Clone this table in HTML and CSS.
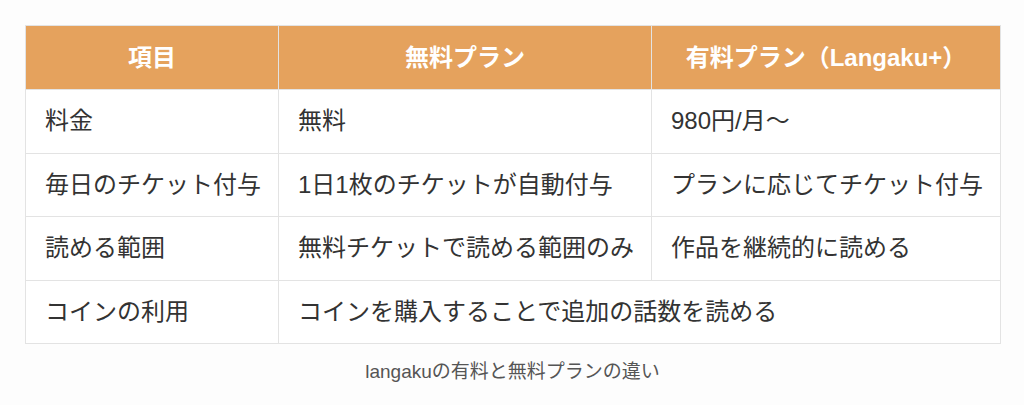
FILE: index.html
```html
<!DOCTYPE html>
<html lang="ja">
<head>
<meta charset="utf-8">
<link rel="stylesheet" href="styles.css">
</head>
<body>
<figure class="fig">
<table class="plans">
<colgroup>
<col class="c1">
<col class="c2">
<col class="c3">
</colgroup>
<thead>
<tr>
<th>項目</th>
<th>無料プラン</th>
<th>有料プラン（Langaku+）</th>
</tr>
</thead>
<tbody>
<tr><td>料金</td><td>無料</td><td>980円/月〜</td></tr>
<tr><td>毎日のチケット付与</td><td>1日1枚のチケットが自動付与</td><td>プランに応じてチケット付与</td></tr>
<tr><td>読める範囲</td><td>無料チケットで読める範囲のみ</td><td>作品を継続的に読める</td></tr>
<tr><td>コインの利用</td><td colspan="2">コインを購入することで追加の話数を読める</td></tr>
</tbody>
</table>
<figcaption class="cap">langakuの有料と無料プランの違い</figcaption>
</figure>
</body>
</html>
```
FILE: styles.css
```css
html, body {
  margin: 0;
  padding: 0;
  background: #fdfdfd;
}
body {
  font-family: "Liberation Sans", "Noto Sans CJK JP", sans-serif;
  color: #333;
}
.fig {
  margin: 0;
  padding: 25px 0 0 25px;
  width: 975px;
}
.plans {
  width: 975px;
  border-collapse: collapse;
  table-layout: fixed;
  font-size: 24px;
  background: #fff;
}
.plans th, .plans td {
  box-sizing: border-box;
  border: 1px solid #e3e3e3;
  height: 63.5px;
  padding: 0 8px 0 19px;
  vertical-align: middle;
  line-height: 1.4;
  white-space: nowrap;
  overflow: hidden;
}
.plans th {
  background: #e5a25d;
  color: #fff;
  font-weight: bold;
  text-align: center;
  height: 64px;
  padding: 0 8px;
}
.plans td {
  text-align: left;
}
.c1 { width: 253px; }
.c2 { width: 373px; }
.c3 { width: 349px; }
.cap {
  text-align: center;
  font-size: 19px;
  color: #555;
  margin-top: 14px;
  line-height: 28px;
}
```
